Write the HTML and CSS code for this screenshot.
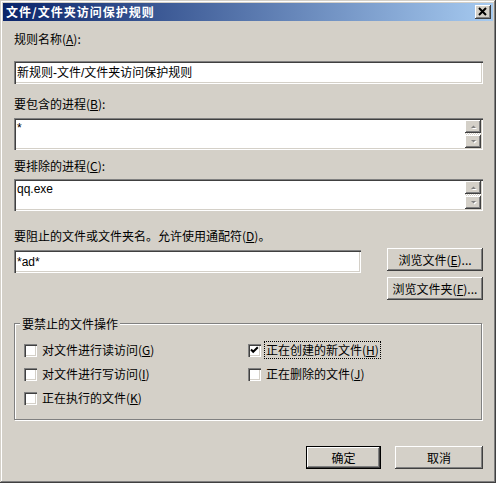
FILE: index.html
```html
<!DOCTYPE html>
<html lang="zh-CN">
<head>
<meta charset="utf-8">
<title>文件/文件夹访问保护规则</title>
<link rel="stylesheet" href="styles.css">
</head>
<body>
<div class="window">
  <div class="titlebar">
    <span class="title">文件/文件夹访问保护规则</span>
    <button class="close" aria-label="关闭">
      <svg width="16" height="14" viewBox="0 0 16 14"><path d="M4 3 L11 10 M11 3 L4 10" stroke="#000" stroke-width="2" fill="none"/></svg>
    </button>
  </div>
  <div class="client">
    <label class="lbl">规则名称(<u>A</u>):</label>
    <div class="field field-name">新规则-文件/文件夹访问保护规则</div>

    <label class="lbl lbl-inc">要包含的进程(<u>B</u>):</label>
    <div class="field area area-inc">
      <span class="area-text">*</span>
      <div class="vscroll">
        <span class="sbtn"><svg width="16" height="13" viewBox="0 0 16 13"><path d="M6 8 L11 8 L8.5 5.5 Z" fill="#fff" transform="translate(1,1)"/><path d="M6 8 L11 8 L8.5 5.5 Z" fill="#808080"/></svg></span>
        <span class="track"></span>
        <span class="sbtn"><svg width="16" height="13" viewBox="0 0 16 13"><path d="M6 5 L11 5 L8.5 7.5 Z" fill="#fff" transform="translate(1,1)"/><path d="M6 5 L11 5 L8.5 7.5 Z" fill="#808080"/></svg></span>
      </div>
    </div>

    <label class="lbl lbl-exc">要排除的进程(<u>C</u>):</label>
    <div class="field area area-exc">
      <span class="area-text">qq.exe</span>
      <div class="vscroll">
        <span class="sbtn"><svg width="16" height="13" viewBox="0 0 16 13"><path d="M6 8 L11 8 L8.5 5.5 Z" fill="#fff" transform="translate(1,1)"/><path d="M6 8 L11 8 L8.5 5.5 Z" fill="#808080"/></svg></span>
        <span class="track"></span>
        <span class="sbtn"><svg width="16" height="13" viewBox="0 0 16 13"><path d="M6 5 L11 5 L8.5 7.5 Z" fill="#fff" transform="translate(1,1)"/><path d="M6 5 L11 5 L8.5 7.5 Z" fill="#808080"/></svg></span>
      </div>
    </div>

    <label class="lbl lbl-path">要阻止的文件或文件夹名。允许使用通配符(<u>D</u>)。</label>
    <div class="pathrow">
      <div class="field field-path">*ad*</div>
      <div class="browse-col">
        <button class="btn btn-browse">浏览文件(<u>E</u>)...</button>
        <button class="btn btn-browse">浏览文件夹(<u>F</u>)...</button>
      </div>
    </div>

    <div class="group">
      <span class="group-title">要禁止的文件操作</span>
      <div class="checks">
        <div class="check"><span class="box"></span><span class="ctext">对文件进行读访问(<u>G</u>)</span></div>
        <div class="check"><span class="box"><svg width="13" height="13" viewBox="0 0 13 13"><path d="M3 5.5 L5.2 7.8 L9.8 3.2" stroke="#000" stroke-width="2" fill="none"/></svg></span><span class="ctext focus">正在创建的新文件(<u>H</u>)</span></div>
        <div class="check"><span class="box"></span><span class="ctext">对文件进行写访问(<u>I</u>)</span></div>
        <div class="check"><span class="box"></span><span class="ctext">正在删除的文件(<u>J</u>)</span></div>
        <div class="check"><span class="box"></span><span class="ctext">正在执行的文件(<u>K</u>)</span></div>
      </div>
    </div>

    <div class="actions">
      <button class="btn btn-ok">确定</button>
      <button class="btn btn-cancel">取消</button>
    </div>
  </div>
</div>
</body>
</html>
```

FILE: styles.css
```css
html, body {
  margin: 0;
  padding: 0;
  background: #d4d0c8;
}

body {
  font-family: "Noto Sans CJK SC", "Liberation Sans", sans-serif;
  font-size: 12px;
  color: #000;
}

.window {
  width: 496px;
  height: 483px;
  box-sizing: border-box;
  padding: 3px;
  background: #d4d0c8;
  box-shadow: inset -1px -1px #404040, inset 1px 1px #d4d0c8, inset -2px -2px #808080, inset 2px 2px #ffffff;
  display: flex;
  flex-direction: column;
}

.titlebar {
  height: 18px;
  flex: none;
  background: linear-gradient(to right, #0a246a, #a6caf0);
  display: flex;
  align-items: center;
  justify-content: space-between;
  padding: 0 2px 0 3px;
}

.title {
  color: #fff;
  font-weight: bold;
  letter-spacing: 1px;
  line-height: 14px;
}

.close {
  width: 16px;
  height: 14px;
  padding: 0;
  border: 0;
  background: #d4d0c8;
  box-shadow: inset -1px -1px #404040, inset 1px 1px #ffffff, inset -2px -2px #808080;
  display: flex;
}

.client {
  flex: 1;
  padding: 11px 10px 0 11px;
  display: flex;
  flex-direction: column;
}

.lbl {
  display: block;
  line-height: 14px;
  height: 14px;
  white-space: nowrap;
}

.lbl-inc { margin-top: 13px; }
.lbl-exc { margin-top: 9px; }
.lbl-path { margin-top: 18px; }

.field {
  box-sizing: border-box;
  height: 23px;
  background: #fff;
  box-shadow: inset 1px 1px #808080, inset 2px 2px #404040, inset -1px -1px #ffffff, inset -2px -2px #d4d0c8;
  display: flex;
  align-items: center;
  padding: 0 3px;
  font-family: "Liberation Sans", "Noto Sans CJK SC", sans-serif;
  line-height: 14px;
  white-space: nowrap;
}

.field-name { margin-top: 15px; }

.area {
  height: 32px;
  padding: 2px;
  align-items: stretch;
}

.area-inc { margin-top: 7px; }
.area-exc { margin-top: 6px; }

.area-text {
  flex: 1;
  padding: 1px 1px 0 1px;
  line-height: 14px;
}

.vscroll {
  width: 16px;
  display: flex;
  flex-direction: column;
}

.sbtn {
  height: 13px;
  background: #d4d0c8;
  box-shadow: inset -1px -1px #404040, inset 1px 1px #ffffff, inset -2px -2px #808080;
  display: flex;
}

.track {
  height: 2px;
  background: repeating-conic-gradient(#ffffff 0 25%, #d4d0c8 0 50%) 0 0 / 2px 2px;
}

.pathrow {
  margin-top: 5px;
  display: flex;
  align-items: flex-start;
}

.field-path {
  width: 347px;
  margin-top: 2px;
}

.browse-col {
  margin-left: auto;
  display: flex;
  flex-direction: column;
  gap: 6px;
}

.btn {
  box-sizing: border-box;
  height: 23px;
  padding: 0;
  border: 0;
  background: #d4d0c8;
  box-shadow: inset -1px -1px #404040, inset 1px 1px #ffffff, inset -2px -2px #808080;
  font-family: "Noto Sans CJK SC", "Liberation Sans", sans-serif;
  font-size: 12px;
  line-height: 14px;
  color: #000;
  white-space: nowrap;
}

.btn-browse { width: 96px; }

.group {
  margin: 23px 1px 0 0;
  border: 1px solid #808080;
  box-shadow: 1px 1px 0 #ffffff, inset 1px 1px 0 #ffffff;
  padding: 0 0 9px 9px;
  display: flex;
  flex-direction: column;
}

.group-title {
  align-self: flex-start;
  margin: -7px 0 0 -4px;
  padding: 0 2px;
  background: #d4d0c8;
  line-height: 14px;
}

.checks {
  margin-top: 7px;
  display: grid;
  grid-template-columns: 224px 1fr;
  grid-auto-rows: 24px;
}

.check {
  display: flex;
  align-items: center;
  gap: 5px;
}

.box {
  width: 13px;
  height: 13px;
  flex: none;
  background: #fff;
  box-shadow: inset 1px 1px #808080, inset 2px 2px #404040, inset -1px -1px #ffffff, inset -2px -2px #d4d0c8;
  display: flex;
}

.ctext {
  line-height: 14px;
  white-space: nowrap;
}

.focus {
  outline: 1px dotted #000;
  outline-offset: 1px;
}

.actions {
  margin-top: 26px;
  display: flex;
  justify-content: flex-end;
  gap: 14px;
}

.btn-ok {
  width: 75px;
  box-shadow: inset 0 0 0 1px #000000, inset -2px -2px #404040, inset 2px 2px #ffffff, inset -3px -3px #808080;
}

.btn-cancel { width: 88px; }
```
